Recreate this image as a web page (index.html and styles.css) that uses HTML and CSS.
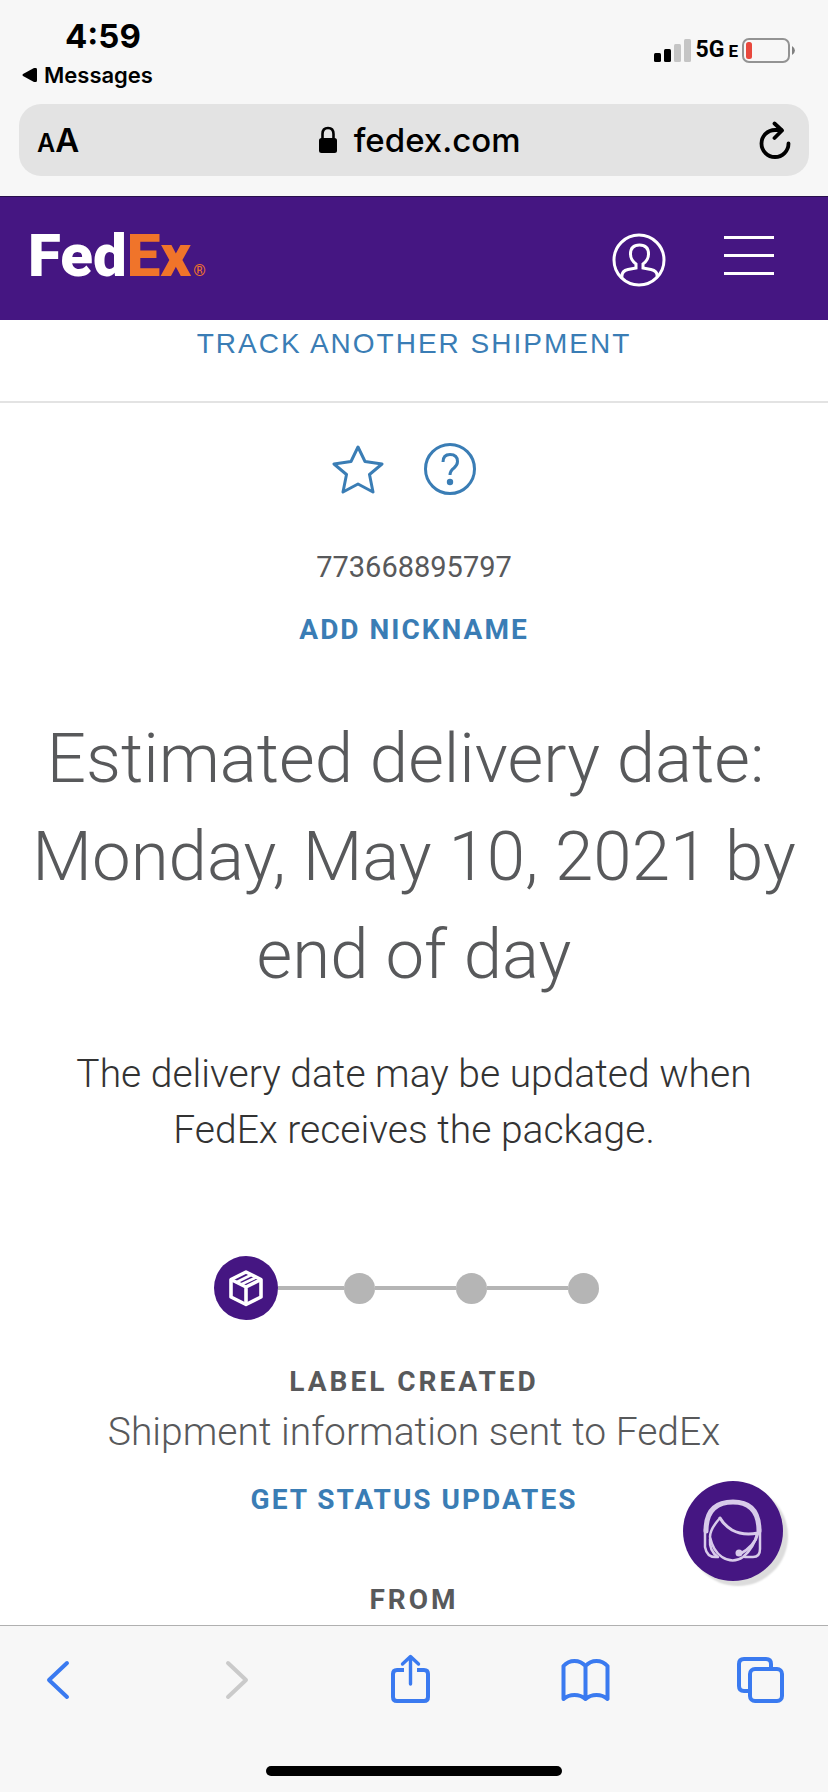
FILE: index.html
```html
<!DOCTYPE html>
<html lang="en">
<head>
    <meta charset="UTF-8">
    <meta name="viewport" content="width=device-width, initial-scale=1.0">
    <title>FedEx Tracking</title>
    <link rel="stylesheet" href="styles.css">
</head>
<body>

    <!-- Browser top bar -->
    <div class="browser-top">
        <div class="status-bar">
            <div class="status-left">
                <div class="time">4:59</div>
                <a href="#" class="back-app">
                    <svg width="15" height="14" viewBox="0 0 15 14"><path d="M1 6 L12 0 Q15 -1 15 2 V12 Q15 15 12 14 L1 8 Q0 7 1 6Z"/></svg>
                    Messages
                </a>
            </div>
            <div class="status-right">
                <svg width="38" height="24" viewBox="0 0 38 24">
                    <rect x="0" y="14" width="7" height="9" rx="1.5"/>
                    <rect x="10" y="10" width="7" height="13" rx="1.5"/>
                    <rect x="20" y="5" width="7" height="18" rx="1.5" fill="#c5c5c5"/>
                    <rect x="30" y="0" width="7" height="23" rx="1.5" fill="#c5c5c5"/>
                </svg>
                <span class="network">5G<small>E</small></span>
                <svg width="54" height="26" viewBox="0 0 54 26">
                    <rect x="1" y="1" width="46" height="23" rx="6" fill="none" stroke="#939393" stroke-width="2"/>
                    <rect x="4" y="4" width="6" height="17" rx="2.5" fill="#e8483d"/>
                    <path d="M50 8 Q53 10 53 12.500 Q53 15 50 17Z" fill="#808080"/>
                </svg>
            </div>
        </div>
        <div class="address-bar">
            <button class="text-size" aria-label="Text size"><small>A</small>A</button>
            <button class="address">
                <svg width="20" height="28" viewBox="0 0 20 28">
                    <path d="M4.500 14 V8 Q4.500 2 10 2 Q15.500 2 15.500 8 V14" fill="none" stroke="#000" stroke-width="2.6"/>
                    <rect x="1" y="12" width="18" height="15" rx="2.500"/>
                </svg>
                fedex.com
            </button>
            <button class="reload" aria-label="Reload">
                <svg width="32" height="38" viewBox="0 0 32 38" fill="none" stroke="#000" stroke-width="3.800" stroke-linecap="round" stroke-linejoin="round">
                    <path d="M29.500 22.500 A13.500 13.500 0 1 1 16 9 H22"/>
                    <path d="M15.500 2.500 L23 9.500 L15.500 17"/>
                </svg>
            </button>
        </div>
    </div>

    <!-- Site header -->
    <header>
        <a href="#" class="logo">Fed<span>Ex</span><sup>®</sup></a>
        <div class="header-buttons">
            <button aria-label="Account">
                <svg width="54" height="54" viewBox="0 0 54 54" fill="none" stroke="#fff" stroke-width="3">
                    <circle cx="27" cy="27" r="25"/>
                    <path d="M10 45 Q9 38 16 36.500 L24 35 V31 Q18.500 27 18.500 21 Q18.500 12 27.500 12 Q36.500 12 36.500 21 Q36.500 27 31 31 V35 L39 36.500 Q46 38 45 44"/>
                </svg>
            </button>
            <button aria-label="Menu">
                <svg width="50" height="54" viewBox="0 0 50 54" fill="#fff">
                    <rect x="0" y="3" width="50" height="3"/>
                    <rect x="0" y="21" width="50" height="3"/>
                    <rect x="0" y="39" width="50" height="3"/>
                </svg>
            </button>
        </div>
    </header>

    <!-- Tracking details -->
    <main>
        <div class="track-another">
            <a href="#">TRACK ANOTHER SHIPMENT</a>
        </div>

        <div class="actions">
            <button aria-label="Add to favorites">
                <svg width="52" height="52" viewBox="0 0 52 52" fill="none" stroke="#3a7db5" stroke-width="3" stroke-linejoin="round">
                    <path d="M26 4 L33 18.500 L50 21 L37.500 31.500 L41 49 L26 41 L11 49 L14.500 31.500 L2 21 L19 18.500Z"/>
                </svg>
            </button>
            <button aria-label="Help">
                <svg width="52" height="52" viewBox="0 0 52 52" fill="none" stroke="#3a7db5" stroke-width="3">
                    <circle cx="26" cy="26" r="24.500"/>
                    <path d="M19 19 Q19 11.500 26 11.500 Q33.500 11.500 33.500 18.500 Q33.500 22 30 25 Q26 28 26 32"/>
                    <circle cx="26" cy="39" r="3.200" fill="#3a7db5" stroke="none"/>
                </svg>
            </button>
        </div>

        <div class="tracking-number">773668895797</div>
        <a href="#" class="nickname">ADD NICKNAME</a>

        <h1>Estimated delivery date:&nbsp; Monday, May 10, 2021 by end of day</h1>
        <p class="note">The delivery date may be updated when FedEx receives the package.</p>

        <ol class="steps">
            <li class="step active">
                <svg width="36" height="38" viewBox="0 0 36 38" fill="none" stroke="#fff" stroke-width="3.600" stroke-linejoin="round">
                    <path d="M18 3 L33 10.500 V28 L18 35.500 L3 28 V10.500Z"/>
                    <path d="M3 10.500 L18 18 L33 10.500 M18 18 V35"/>
                    <path d="M8 13.500 L23 6 M13 15.500 L28 8.500" stroke-width="2.600"/>
                </svg>
            </li>
            <li class="step"></li>
            <li class="step"></li>
            <li class="step"></li>
        </ol>

        <h2 class="status-title">LABEL CREATED</h2>
        <p class="status-text">Shipment information sent to FedEx</p>
        <a href="#" class="updates">GET STATUS UPDATES</a>
        <h2 class="from">FROM</h2>

        <!-- Support chat -->
        <button class="chat" aria-label="Chat with support">
            <svg width="100" height="100" viewBox="0 0 100 100" fill="none" stroke="#d8cbea" stroke-linecap="round" stroke-linejoin="round">
                <path d="M23 50 Q23 21 50 21 Q76 21 76 50" stroke-width="5"/>
                <path d="M22 48 V66 Q24 77 34 76" stroke-width="2.500"/>
                <path d="M77 48 V68 Q77 76 70 76 H62" stroke-width="2.500"/>
                <path d="M37 37 Q27 48 27 56 Q30 70 39 76 Q50 83 60 76 Q71 67 74 53" stroke-width="2.500"/>
                <path d="M27 58 Q26 70 35 76" stroke-width="2.500"/>
                <path d="M37 37 Q41 44 49 49 Q60 55 75 52 Q72 65 57 73" stroke-width="3"/>
                <circle cx="56" cy="72" r="3.500" fill="#d8cbea" stroke="none"/>
            </svg>
        </button>
    </main>

    <!-- Browser toolbar -->
    <nav class="toolbar">
        <div class="toolbar-buttons">
            <button aria-label="Back">
                <svg width="56" height="56" viewBox="0 0 56 56"><path d="M37 11 L19 28 L37 45"/></svg>
            </button>
            <button aria-label="Forward" class="inactive">
                <svg width="56" height="56" viewBox="0 0 56 56"><path d="M22 11 L40 28 L22 45"/></svg>
            </button>
            <button aria-label="Share">
                <svg width="56" height="56" viewBox="0 0 56 56">
                    <path d="M23 18 H16 Q12 18 12 22 V45 Q12 49 16 49 H43 Q47 49 47 45 V22 Q47 18 43 18 H36" stroke-linecap="butt"/>
                    <path d="M29.500 32 V5 M21.500 12 L29.500 4.500 L37.500 12" stroke-width="3.400"/>
                </svg>
            </button>
            <button aria-label="Bookmarks">
                <svg width="56" height="56" viewBox="0 0 56 56">
                    <path d="M28.500 14 Q24 9 17.500 9 Q11 9 6.500 14 V47 Q11 43 17.500 43 Q24 43 28.500 47 Q33 43 39.500 43 Q46 43 50.500 47 V14 Q46 9 39.500 9 Q33 9 28.500 14 V47"/>
                </svg>
            </button>
            <button aria-label="Tabs">
                <svg width="56" height="56" viewBox="0 0 56 56">
                    <path d="M18 39 H12 Q7 39 7 34 V12 Q7 7 12 7 H34 Q39 7 39 12 V17" stroke-linecap="butt"/>
                    <rect x="18" y="17" width="32" height="32" rx="5"/>
                </svg>
            </button>
        </div>
        <div class="home-indicator"></div>
    </nav>

</body>
</html>
```

FILE: styles.css
```css
* {
    margin: 0;
    padding: 0;
    box-sizing: border-box;
}

body {
    min-height: 100vh;
    display: flex;
    flex-direction: column;
    background-color: white;
    font-family: Roboto, Arial, sans-serif;
    font-size: 28px;
    line-height: 32px;
    color: #58595b;
}

a {
    color: #3a7db5;
    text-decoration: none;
}

button {
    display: flex;
    align-items: center;
    background: none;
    border: none;
    cursor: pointer;
}

svg {
    display: block;
}

/* Browser top bar */
.browser-top {
    background-color: #f7f7f7;
    padding: 20px 19px;
    font-family: Inter, sans-serif;
    color: black;
}

.status-bar {
    display: flex;
    justify-content: space-between;
    align-items: flex-start;
    padding: 0 13px 0 3px;
    margin-bottom: 16px;
}

.time {
    padding-left: 43px;
    font-size: 33px;
    font-weight: 700;
}

.back-app {
    display: flex;
    align-items: center;
    gap: 7px;
    margin-top: 10px;
    font-size: 22px;
    line-height: 26px;
    font-weight: 600;
    color: black;
}

.status-right {
    display: flex;
    align-items: center;
    gap: 4px;
    padding-top: 14px;
}

.network {
    display: flex;
    align-items: baseline;
    gap: 4px;
    font-family: Roboto, sans-serif;
    font-size: 23px;
    font-weight: 700;
}

.network small {
    font-size: 17px;
}

.address-bar {
    display: flex;
    justify-content: space-between;
    align-items: center;
    height: 72px;
    padding: 0 18px;
    background-color: #e3e3e3;
    border-radius: 22px;
}

.text-size,
.address {
    font-family: Inter, sans-serif;
    font-size: 33px;
    font-weight: 500;
    color: black;
}

.text-size {
    align-items: baseline;
    font-weight: 600;
}

.text-size small {
    font-size: 25px;
}

.address {
    gap: 16px;
}

/* Site header */
header {
    display: flex;
    justify-content: space-between;
    align-items: center;
    height: 124px;
    padding: 2px 54px 0 28px;
    background-color: #451682;
    border-top: 1px solid #28104c;
}

.logo {
    padding-top: 8px;
    font-size: 60px;
    line-height: 64px;
    font-weight: 900;
    color: white;
}

.logo span {
    color: #f0742a;
}

.logo sup {
    margin-left: 2px;
    font-size: 16px;
    font-weight: 400;
    vertical-align: baseline;
    color: #f0742a;
}

.header-buttons {
    display: flex;
    gap: 58px;
}

/* Tracking details */
main {
    position: relative;
    flex: 1;
    display: flex;
    flex-direction: column;
    align-items: center;
    padding-bottom: 9px;
    text-align: center;
}

.track-another {
    width: 100%;
    padding: 8px 0 41px;
    border-bottom: 2px solid #e3e3e3;
    font-family: "Liberation Sans", Arial, sans-serif;
    letter-spacing: 2px;
}

.track-another a {
    display: block;
}

.actions {
    display: flex;
    gap: 40px;
    margin-top: 40px;
    padding-right: 20px;
}

.tracking-number {
    margin-top: 56px;
    font-size: 29px;
}

.nickname,
.updates,
.status-title,
.from {
    font-size: 28px;
    font-weight: 700;
    letter-spacing: 2px;
}

.nickname {
    margin-top: 31px;
}

h1 {
    margin-top: 64px;
    padding: 0 24px;
    font-size: 69px;
    line-height: 98px;
    font-weight: 300;
}

.note,
.status-text {
    font-size: 39px;
    line-height: 56px;
    font-weight: 300;
}

.note {
    margin-top: 42px;
    padding: 0 60px;
    color: #333;
}

/* Progress steps */
.steps {
    display: flex;
    align-items: center;
    margin-top: 98px;
    padding-right: 16px;
    list-style: none;
}

.step {
    display: flex;
    align-items: center;
}

.step::before {
    content: '';
    width: 81px;
    height: 4px;
    background-color: #b5b5b5;
}

.step::after {
    content: '';
    width: 31px;
    height: 31px;
    border-radius: 50%;
    background-color: #b5b5b5;
}

.step.active {
    justify-content: center;
    width: 64px;
    height: 64px;
    border-radius: 50%;
    background-color: #451682;
}

.step.active::before,
.step.active::after {
    display: none;
}

.step.active + .step::before {
    width: 66px;
}

.status-title,
.from {
    letter-spacing: 3px;
}

.status-title {
    margin-top: 46px;
}

.status-text {
    margin-top: 6px;
}

.updates {
    margin-top: 24px;
}

.from {
    margin-top: 68px;
}

.chat {
    position: absolute;
    right: 45px;
    bottom: 44px;
    border-radius: 50%;
    background-color: #451682;
    box-shadow: 5px 5px 2px #dcdcdc;
}

/* Browser toolbar */
.toolbar {
    padding: 26px 0 16px;
    background-color: #f7f7f7;
    border-top: 1px solid #b0b0b0;
}

.toolbar-buttons {
    display: flex;
    justify-content: space-between;
    padding: 0 40px 0 30px;
}

.toolbar svg {
    fill: none;
    stroke: #3a7af0;
    stroke-width: 4;
    stroke-linecap: round;
    stroke-linejoin: round;
}

.toolbar .inactive svg {
    stroke: #cacaca;
}

.home-indicator {
    width: 296px;
    height: 10px;
    margin: 58px auto 0;
    border-radius: 5px;
    background-color: black;
}
```
